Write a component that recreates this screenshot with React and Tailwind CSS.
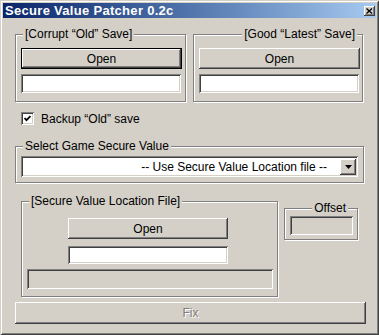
const raised =
  "shadow-[inset_-1px_-1px_#404040,inset_1px_1px_#ffffff,inset_-2px_-2px_#808080,inset_2px_2px_#d4d0c8]";
const sunken =
  "shadow-[inset_1px_1px_#808080,inset_-1px_-1px_#ffffff,inset_2px_2px_#404040,inset_-2px_-2px_#d4d0c8]";

function Group({ label, labelPos = "left-[7px]", className = "", children }) {
  return (
    <div
      className={`relative border border-[#808080] shadow-[inset_1px_1px_#ffffff,1px_1px_#ffffff] ${className}`}
    >
      <span
        className={`absolute -top-[8px] bg-[#d4d0c8] px-[2px] leading-[14px] whitespace-nowrap ${labelPos}`}
      >
        {label}
      </span>
      {children}
    </div>
  );
}

function Button({ children, def, className = "" }) {
  return (
    <div
      className={`flex items-center justify-center bg-[#d4d0c8] ${
        def ? "border border-black" : ""
      } ${className}`}
    >
      <div className={`flex h-full w-full items-center justify-center ${raised}`}>{children}</div>
    </div>
  );
}

function Field({ className = "", gray }) {
  return <div className={`${gray ? "bg-[#d4d0c8]" : "bg-white"} ${sunken} ${className}`} />;
}

export default function App() {
  return (
    <div
      className="flex h-[335px] w-[379px] flex-col bg-[#d4d0c8] p-[3px] text-[12px] text-black shadow-[inset_1px_1px_#d4d0c8,inset_-1px_-1px_#404040,inset_2px_2px_#ffffff,inset_-2px_-2px_#808080]"
      style={{ fontFamily: '"Liberation Sans", Arial, sans-serif' }}
    >
      <div className="flex h-[15px] items-center justify-between bg-gradient-to-r from-[#0a246a] to-[#a6caf0] pl-[2px] pr-[1px]">
        <span className="text-[13px] font-bold leading-none tracking-[0.3px] text-white">
          Secure Value Patcher 0.2c
        </span>
        <div className={`flex h-[10px] w-[11px] items-center justify-center bg-[#d4d0c8] ${raised}`}>
          <svg width="7" height="6" viewBox="0 0 7 6">
            <path d="M0.5 0.5 L6 5.5 M6 0.5 L0.5 5.5" stroke="#000" strokeWidth="1.3" />
          </svg>
        </div>
      </div>

      <div className="flex flex-col pl-[12px]">
        <div className="mt-[16px] flex">
          <Group label="[Corrupt “Old” Save]" className="h-[68px] w-[171px] pl-[5px] pt-[13px]">
            <Button def className="h-[21px] w-[161px]">Open</Button>
            <Field className="mt-[5px] h-[19px] w-[160px]" />
          </Group>
          <Group
            label="[Good “Latest” Save]"
            labelPos="right-[5px]"
            className="ml-[7px] h-[68px] w-[170px] pl-[5px] pt-[13px]"
          >
            <Button className="h-[21px] w-[161px]">Open</Button>
            <Field className="mt-[5px] h-[19px] w-[160px]" />
          </Group>
        </div>

        <div className="mt-[10px] flex h-[13px] items-center pl-[6px]">
          <div className={`flex h-[13px] w-[13px] items-center justify-center bg-white ${sunken}`}>
            <svg width="7" height="7" viewBox="0 0 7 7">
              <path d="M0.5 3 L2.5 5.2 L6.5 1" fill="none" stroke="#000" strokeWidth="1.8" />
            </svg>
          </div>
          <span className="ml-[7px] leading-none">Backup “Old” save</span>
        </div>

        <Group label="Select Game Secure Value" className="mt-[21px] h-[37px] w-[349px] pl-[5px] pt-[9px]">
          <div className={`flex h-[21px] w-[337px] items-center bg-white px-[2px] ${sunken}`}>
            <span className="flex-1 pr-[13px] text-right leading-none">
              -- Use Secure Value Location file --
            </span>
            <div className={`flex h-[16px] w-[16px] items-center justify-center bg-[#d4d0c8] ${raised}`}>
              <svg width="7" height="4" viewBox="0 0 7 4">
                <path d="M0 0 H7 L3.5 4 Z" fill="#000" />
              </svg>
            </div>
          </div>
        </Group>

        <div className="mt-[18px] flex items-start">
          <Group
            label="[Secure Value Location File]"
            className="ml-[6px] h-[96px] w-[257px] pl-[5px] pt-[16px]"
          >
            <Button className="ml-[41px] h-[21px] w-[160px]">Open</Button>
            <Field className="ml-[41px] mt-[7px] h-[18px] w-[160px]" />
            <Field gray className="mt-[5px] h-[20px] w-[246px]" />
          </Group>
          <Group
            label="Offset"
            labelPos="right-[9px]"
            className="ml-[6px] mt-[7px] h-[32px] w-[74px] pl-[5px] pt-[7px]"
          >
            <Field gray className="h-[19px] w-[63px]" />
          </Group>
        </div>

        <Button className="mt-[5px] h-[22px] w-[351px]">
          <span className="text-[#808080] [text-shadow:1px_1px_#ffffff]">Fix</span>
        </Button>
      </div>
    </div>
  );
}
